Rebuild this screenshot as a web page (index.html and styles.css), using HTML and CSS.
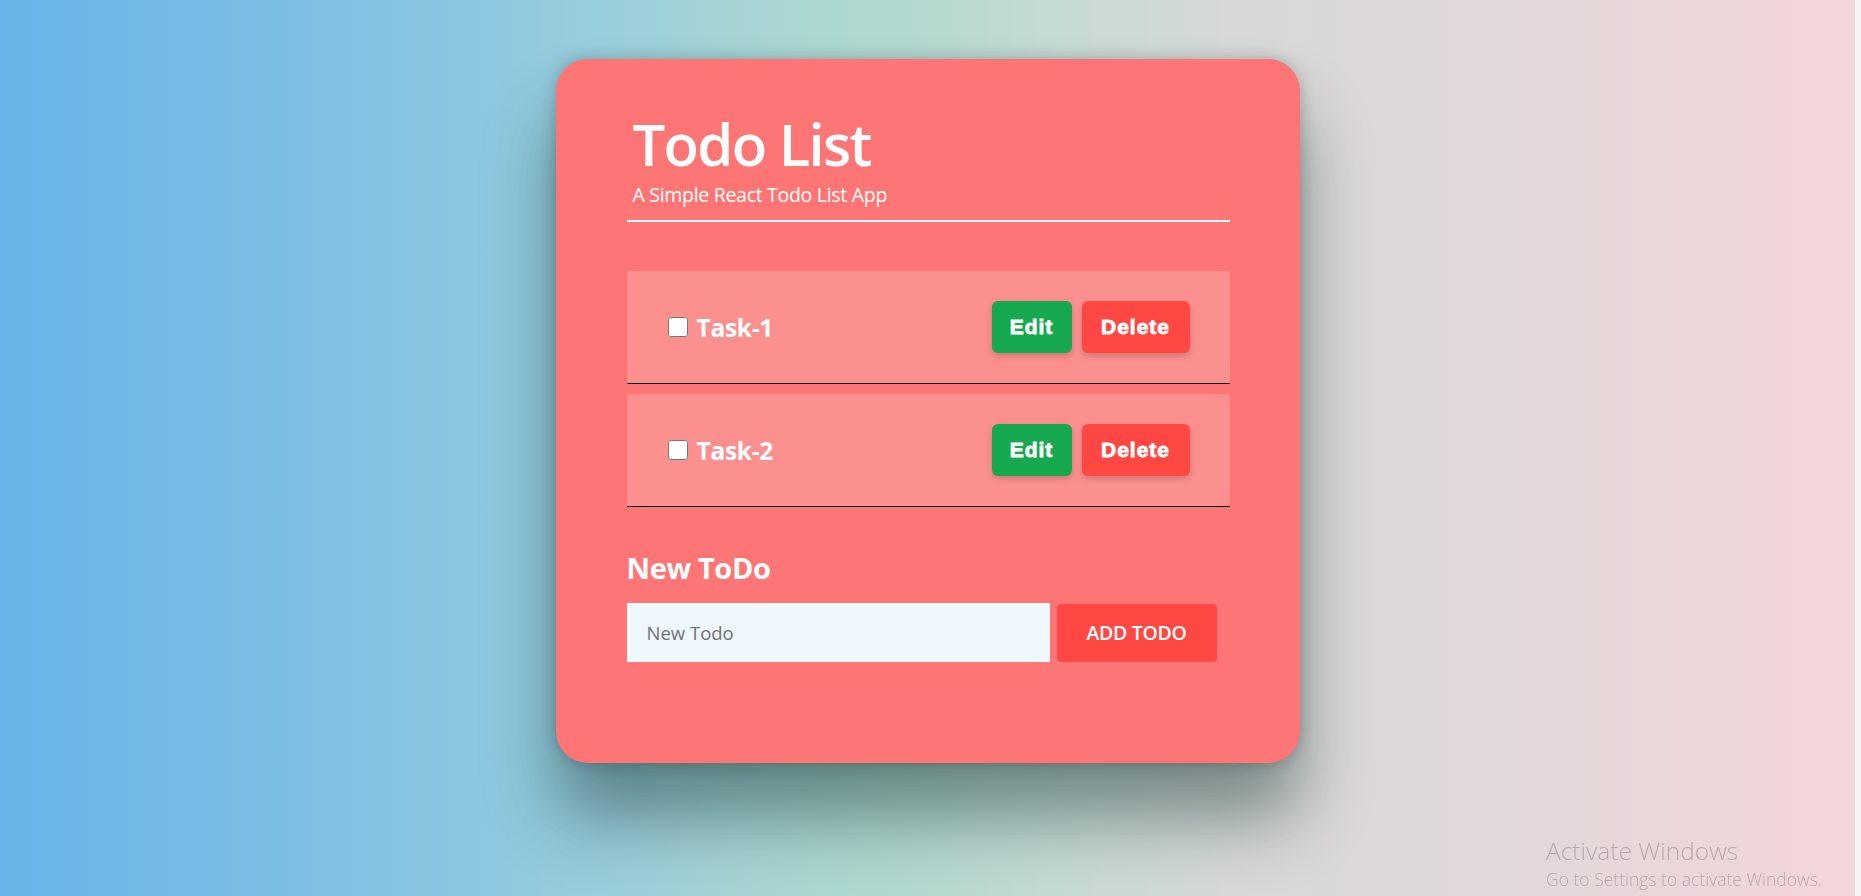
FILE: index.html
```html
<!DOCTYPE html>
<html lang="en">
<head>
<meta charset="utf-8">
<title>Todo List</title>
<link rel="stylesheet" href="styles.css">
</head>
<body>
<div class="page">
  <main class="card">
    <header class="header">
      <h1 class="title">Todo List</h1>
      <p class="subtitle">A Simple React Todo List App</p>
    </header>
    <ul class="list">
      <li class="todo">
        <label class="todo-label"><input type="checkbox" class="check"><span>Task-1</span></label>
        <div class="actions">
          <button class="btn btn-edit">Edit</button>
          <button class="btn btn-delete">Delete</button>
        </div>
      </li>
      <li class="todo">
        <label class="todo-label"><input type="checkbox" class="check"><span>Task-2</span></label>
        <div class="actions">
          <button class="btn btn-edit">Edit</button>
          <button class="btn btn-delete">Delete</button>
        </div>
      </li>
    </ul>
    <form class="new-form">
      <h2 class="new-title">New ToDo</h2>
      <div class="new-row">
        <input class="new-input" type="text" placeholder="New Todo">
        <button type="button" class="add-btn">ADD TODO</button>
      </div>
    </form>
  </main>
</div>
<div class="watermark">
  <div class="wm-title">Activate Windows</div>
  <div class="wm-sub">Go to Settings to activate Windows.</div>
</div>
</body>
</html>
```
FILE: styles.css
```css
html, body {
  margin: 0;
  padding: 0;
  height: 100%;
  background: #f7f2f3;
  font-family: "Open Sans", "Noto Sans", sans-serif;
  overflow: hidden;
}
.page {
  width: calc(100% - 6px);
  height: 896px;
  background: linear-gradient(to right, #67b4ea 0%, #7dbfe3 16%, #8fc8df 27%, #a3d3d6 38%, #b1d9cf 48%, #c6dad4 57%, #d6d9d6 66%, #dcd8d8 74%, #e6d7d9 86%, #f4d6dc 100%);
  padding-top: 59px;
  box-sizing: border-box;
}
.card {
  width: 744px;
  height: 704px;
  margin: 0 auto;
  box-sizing: border-box;
  padding: 0 70px 0 71px;
  background: #fe7575;
  border-radius: 32px;
  box-shadow: 0 0 16px rgba(0, 0, 0, 0.22), 0 55px 70px rgba(20, 50, 50, 0.48);
  overflow: hidden;
}
.header {
  padding: 48px 6px 13px 6px;
  border-bottom: 2px solid #ffffff;
  color: #ffffff;
}
.title {
  margin: 0;
  font-size: 58px;
  font-weight: 600;
  line-height: 74px;
  letter-spacing: -1.7px;
}
.subtitle {
  margin: 2px 0 0 0;
  font-size: 19.5px;
  line-height: 24px;
  letter-spacing: -0.3px;
}
.list {
  list-style: none;
  margin: 49px 0 0 0;
  padding: 0;
}
.todo {
  display: flex;
  align-items: center;
  justify-content: space-between;
  height: 113px;
  box-sizing: border-box;
  padding: 0 40px 0 41px;
  background: #fb908e;
  border-bottom: 1px solid #000000;
  margin-bottom: 10px;
}
.todo-label {
  display: flex;
  align-items: center;
  gap: 9px;
  color: #ffffff;
  font-size: 24.5px;
  font-weight: 700;
  letter-spacing: -0.3px;
}
.check {
  width: 20px;
  height: 20px;
  margin: 0;
}
.actions {
  display: flex;
  gap: 10px;
}
.btn {
  height: 52px;
  border: none;
  border-radius: 6px;
  color: #ffffff;
  font-family: "Liberation Sans", Arial, sans-serif;
  font-weight: 700;
  font-size: 21px;
  letter-spacing: 1px;
  -webkit-text-stroke: 0.8px #ffffff;
  box-shadow: 0 3px 6px rgba(0, 0, 0, 0.18);
  cursor: pointer;
}
.btn-edit {
  width: 80px;
  padding: 0;
  background: #16a950;
}
.btn-delete {
  width: 108px;
  padding: 0;
  background: #ff4844;
}
.new-form {
  margin-top: 43px;
}
.new-title {
  margin: 0 0 17px 0;
  color: #ffffff;
  font-size: 29px;
  font-weight: 700;
  line-height: 36px;
  letter-spacing: -0.4px;
}
.new-row {
  display: flex;
  align-items: center;
  gap: 7px;
}
.new-input {
  width: 423px;
  height: 59px;
  box-sizing: border-box;
  border: none;
  outline: none;
  padding: 0 20px;
  background: #f0f8ff;
  font-family: "Open Sans", sans-serif;
  font-size: 18.5px;
  color: #333;
}
.new-input::placeholder {
  color: #6f7378;
}
.add-btn {
  width: 160px;
  height: 58px;
  border: none;
  border-radius: 4px;
  background: #ff4844;
  color: #ffffff;
  font-family: "Open Sans", sans-serif;
  font-size: 19.5px;
  font-weight: 600;
  letter-spacing: -0.3px;
}
.watermark {
  position: fixed;
  left: 1546px;
  top: 837px;
  color: rgba(110, 105, 105, 0.4);
  font-family: "Open Sans", sans-serif;
  font-weight: 300;
  pointer-events: none;
}
.wm-title {
  font-size: 24.5px;
  line-height: 28px;
}
.wm-sub {
  font-size: 17.5px;
  line-height: 28px;
}
```
